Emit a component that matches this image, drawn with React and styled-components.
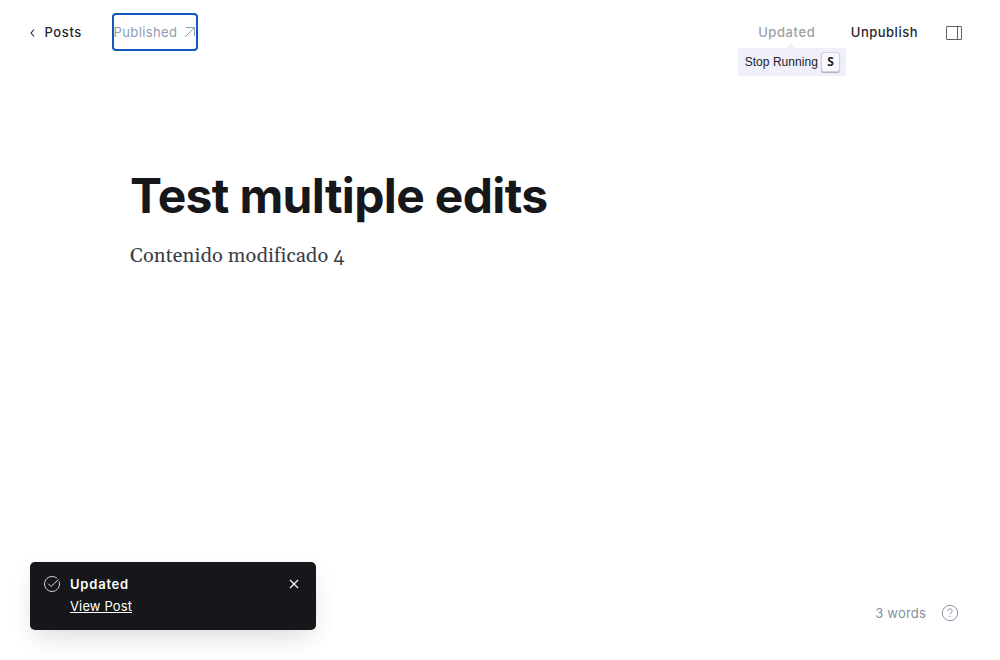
import React from 'react';
import styled, { createGlobalStyle } from 'styled-components';

const Global = createGlobalStyle`
  *{box-sizing:border-box}
  body{margin:0;background:#fff;font-family:Inter,sans-serif;color:#15171a;-webkit-font-smoothing:antialiased}
`;
const Page = styled.div`height:660px;display:flex;flex-direction:column;overflow:hidden;`;
const Header = styled.header`height:64px;display:flex;align-items:center;justify-content:space-between;padding:0 38px 0 29px;font-size:13px;`;
const Group = styled.div`display:flex;align-items:center;`;
const Back = styled.a`display:flex;align-items:center;gap:8.5px;width:83px;font-weight:500;letter-spacing:.6px;color:#24282e;`;
const Published = styled.a`display:flex;align-items:center;justify-content:space-between;width:86px;height:38px;border:2px solid #0f58bd;border-radius:4px;color:#8e9cac;letter-spacing:.4px;span{margin-left:-.5px}`;
const Action = styled.span`position:relative;font-weight:500;color:${p => p.$muted ? '#9b9fa3' : '#24282e'};letter-spacing:${p => p.$muted ? '.58px' : '.5px'};margin-right:${p => p.$gap}px;`;
const Tooltip = styled.div`position:absolute;top:24px;left:-20px;width:108px;height:28px;border-radius:3px;background:#f0f0fa;color:#202128;display:flex;align-items:center;justify-content:space-between;padding:0 6px 0 6.5px;font:400 12px "Liberation Sans",sans-serif;letter-spacing:.04px;white-space:nowrap;
  &::before{content:'';position:absolute;left:48px;top:-5px;border:5px solid transparent;border-top:0;border-bottom-color:#f0f0fa;}`;
const Key = styled.kbd`width:19px;height:20px;padding-bottom:1px;border:1px solid #cfd0dc;border-radius:3px;background:#f8f8fd;box-shadow:0 1px 1px #aaaabb;display:flex;align-items:center;justify-content:center;font:700 12px/17px "Noto Sans",sans-serif;`;
const Editor = styled.main`flex:1;padding:105px 130px 0;`;
const Title = styled.h1`margin:0;font-size:48px;line-height:53px;font-weight:700;letter-spacing:-.65px;`;
const Content = styled.p`margin:18px 0 0;font:400 20px/32px Gelasio,Georgia,"Liberation Serif",serif;letter-spacing:.1px;color:#394047;`;
const Footer = styled.footer`height:98px;display:flex;justify-content:space-between;padding:0 41px 0 30px;`;
const Toast = styled.aside`width:286px;height:68px;background:#15171a;color:#fff;border-radius:5px;box-shadow:0 0 1px rgba(0,0,0,.05),0 5px 22px rgba(0,0,0,.06),0 16px 30px -8px rgba(0,0,0,.09);display:flex;padding:13px 16px 0 14px;gap:10px;font-size:13px;svg{flex:none}`;
const Message = styled.div`flex:1;display:flex;flex-direction:column;line-height:18px;gap:4px;letter-spacing:.13px;strong{font-weight:600;letter-spacing:.78px}a{text-decoration:underline}`;
const Count = styled.div`display:flex;gap:15px;height:20px;margin-top:41px;align-items:center;color:#8190a0;font-size:13px;letter-spacing:.2px;span{padding-bottom:1px}`;

export default function App() {
  return <Page><Global />
    <Header>
      <Group><Back><svg width="7" height="10" viewBox="0 0 7 10" fill="none" stroke="currentColor" strokeWidth="1.1"><path d="M5 2.5 2 6l3 3.5"/></svg>Posts</Back>
        <Published><span>Published</span><svg width="12" height="12" viewBox="0 0 12 12" fill="none" stroke="currentColor"><path d="M1 11 10.5 1.5M2 1.5h8.5V10"/></svg></Published></Group>
      <Group><Action $muted $gap={35.5}>Updated<Tooltip>Stop Running<Key>S</Key></Tooltip></Action><Action $gap={28}>Unpublish</Action>
        <svg width="16" height="16" viewBox="0 0 16 16" fill="none" stroke="#596068"><rect x=".5" y="2.5" width="15" height="13" rx=".5"/><path d="M11.5 2.5v13"/></svg></Group>
    </Header>
    <Editor><Title>Test multiple edits</Title><Content>Contenido modificado 4</Content></Editor>
    <Footer><Toast><svg width="16" height="18" viewBox="0 0 16 18" fill="none" stroke="#d5d7d8"><path d="M15.1 6.5A7.5 7.5 0 1 1 12.8 3.2M4.2 8.7 7 11.5l7.5-7"/></svg><Message><strong>Updated</strong><a>View Post</a></Message><svg width="12" height="18" viewBox="0 0 12 18" stroke="currentColor" strokeWidth="1.1"><path d="m2 5 8 8m0-8-8 8"/></svg></Toast>
      <Count><span>3 words</span><svg width="18" height="18" viewBox="0 0 18 18" fill="none" stroke="currentColor" strokeWidth=".95"><circle cx="9" cy="9" r="7.7"/><path d="M6.8 7a2.2 2.2 0 1 1 3.4 1.8C9.4 9.3 9 9.5 9 10.5M9 12v1"/></svg></Count></Footer>
  </Page>;
}
